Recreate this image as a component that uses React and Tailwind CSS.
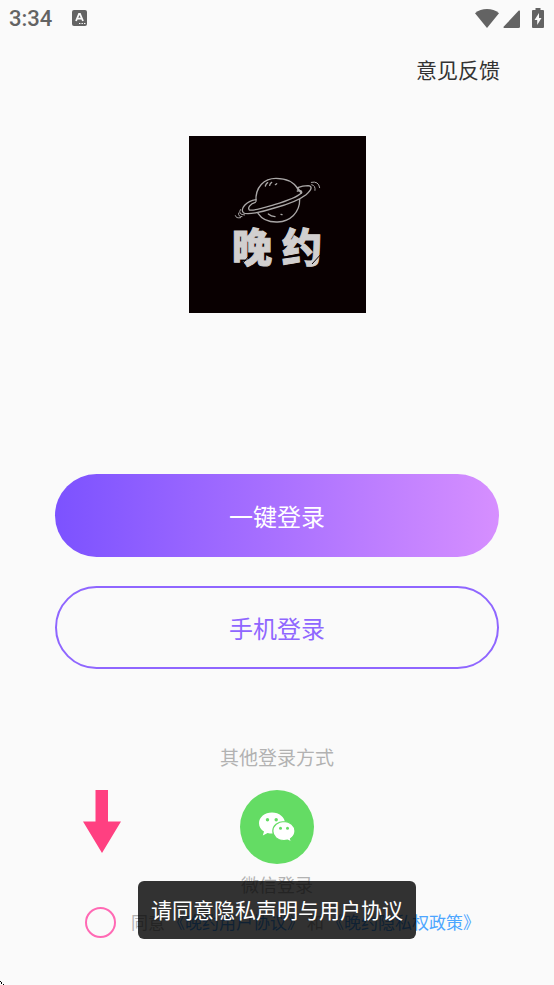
import { useState } from "react";

function StatusBar() {
  return (
    <div className="flex h-9 items-center justify-between pl-[9px] pr-[10px] text-[#636363]">
      <div className="flex items-center gap-5">
        <span className="pt-[2px] font-[Roboto,sans-serif] text-[22px] font-medium leading-6">3:34</span>
        <svg width="15" height="16" viewBox="0 0 15 16">
          <rect width="15" height="16" rx="2" fill="currentColor" />
          <path d="M4 11 L7 4 H8 L11 11 M5.2 8.7 H9.8" fill="none" stroke="#fafafa" strokeWidth="1.8" />
          <path d="M7 13.5h1.4M9.5 13.5h1.4M12 13.5h1.4" stroke="#fafafa" strokeWidth="1.2" />
        </svg>
      </div>
      <div className="flex items-end">
        <svg width="24" height="19" viewBox="0 0 24 19" className="mr-1">
          <path d="M0 4.2C3.4 1.4 7.5 0 12 0s8.6 1.4 12 4.2L12 19z" fill="currentColor" />
        </svg>
        <svg width="17" height="18" viewBox="0 0 17 18" className="mr-3">
          <path d="M17 1.2V16.5Q17 18 15.5 18H1Q0 17.5 .6 16.8L15.8 .6Q17 0 17 1.2z" fill="currentColor" />
        </svg>
        <svg width="12" height="20" viewBox="0 0 12 20">
          <path d="M3.5 0h5v2H11q1 0 1 1v16q0 1-1 1H1q-1 0-1-1V3q0-1 1-1h2.5z" fill="currentColor" />
          <path d="M7 5 L2.5 12 H5.2 V17 L9.5 10 H7z" fill="#fafafa" />
        </svg>
      </div>
    </div>
  );
}

function Logo() {
  return (
    <div className="mx-auto flex h-[177px] w-[177px] flex-col items-center bg-[#090001] pt-10">
      <svg width="90" height="49" viewBox="8 12 270 147" fill="none" stroke="#aaa7a7" strokeWidth="4" strokeLinecap="round">
        {/* planet */}
        <path d="M80 88C77 45 105 19 140 19C170 19 195 32 207 52" />
        <path d="M86 124C98 142 118 151 145 150C182 148 212 122 211 82" />
        {/* ring */}
        <path d="M80 83C50 88 32 110 42 122C52 130 98 120 135 108C172 98 212 82 230 68C248 53 250 42 236 41C225 41 215 43 205 47" />
        <path d="M78 91C63 95 54 107 60 114C75 117 105 107 135 98C172 87 205 74 216 63Q220 53 204 57" />
        <path d="M205 50L216 62" strokeWidth="6" />
        {/* shading and motion marks */}
        <path d="M108 42q2-7 7-10M121 40q1-6 6-9M138 38l4-3" />
        <path d="M117 126q8 7 20 8M155 127l3 1" />
        <path d="M246 31Q268 26 271 47M247 38Q259 40 257 55M33 113Q25 128 46 129M28 123Q25 134 38 134M18 131Q20 140 34 137" strokeWidth="3" />
      </svg>
      <div className="relative -mt-[3px] flex gap-[10px] font-['Noto_Sans_CJK_SC',sans-serif] text-[40px] font-black leading-[46px] text-[#d1cfcf] [-webkit-text-stroke:1px_#d1cfcf]">
        <span>晚</span>
        <span>约</span>
        <svg className="absolute inset-0" width="90" height="46" viewBox="0 0 90 46" fill="none" stroke="#090001">
          <path d="M11 41L17 34M51 35L66 33M80 42L90 31" />
        </svg>
      </div>
    </div>
  );
}

function DownArrow() {
  return (
    <svg width="38" height="63" viewBox="0 0 38 63">
      <path d="M12.5 0h12.5v31.5H38L19 63L0 31.5h12.5z" fill="#ff4081" />
    </svg>
  );
}

function WechatIcon() {
  return (
    <svg width="36" height="30" viewBox="0 0 36 30">
      <path d="M13 .5C5.8 .5 0 5.2 0 11.2c0 3.5 1.9 6.4 5 8.3L3.8 23.5l4.8-2.6c1.4.4 2.9.6 4.4.6 7.2 0 13-4.4 13-10.3S20.2.5 13 .5z" fill="#fff" />
      <path d="M25 9.5c-6.2 0-11.2 4.2-11.2 9.6S18.8 28.6 25 28.6c1.2 0 2.4-.2 3.5-.5l4 2-1-3.4c2.8-1.8 4.5-4.5 4.5-7.6 0-5.4-4.9-9.6-11-9.6z" fill="#fff" stroke="#64dc64" strokeWidth="1.2" />
      <circle cx="8.5" cy="7.7" r="1.7" fill="#64dc64" />
      <circle cx="17.2" cy="7.7" r="1.7" fill="#64dc64" />
      <circle cx="21.5" cy="16.3" r="1.5" fill="#64dc64" />
      <circle cx="28.5" cy="16.3" r="1.5" fill="#64dc64" />
    </svg>
  );
}

export default function App() {
  const [agreed, setAgreed] = useState(false);

  return (
    <div className="relative min-h-screen overflow-hidden bg-[#fafafa] font-['Noto_Sans_CJK_SC',sans-serif]">
      <StatusBar />

      <header className="flex justify-end px-[54px] pt-[18px]">
        <button className="text-[21px] leading-[30px] text-[#333]">意见反馈</button>
      </header>

      <main className="pt-[52px]">
        <Logo />

        <div className="mx-[55px] mt-[161px] flex flex-col gap-[29px]">
          <button className="h-[83px] rounded-full bg-linear-[90deg,#7c52ff,#d68fff] text-2xl text-white">
            一键登录
          </button>
          <button className="h-[83px] rounded-full border-2 border-[#8f66ff] text-2xl text-[#8f66ff]">
            手机登录
          </button>
        </div>

        <p className="mt-[74px] text-center text-[19px] leading-7 text-[#b2b2b2]">其他登录方式</p>

        <div className="mt-[19px] grid grid-cols-[1fr_auto_1fr] items-start">
          <div className="pl-[83px]">
            <DownArrow />
          </div>
          <button className="flex flex-col items-center gap-[6px] text-lg leading-7 text-[#b2b2b2]">
            <span className="flex h-[74px] w-[74px] items-center justify-center rounded-full bg-[#64dc64]">
              <WechatIcon />
            </span>
            微信登录
          </button>
        </div>

        <div className="mt-[9px] flex items-center gap-[15px] whitespace-nowrap pl-[85px] text-[17px] leading-7 text-[#b2b2b2]">
          <input
            id="agree"
            type="checkbox"
            className="h-[31px] w-[31px] shrink-0 appearance-none rounded-full border-2 border-[#ff69b4] checked:bg-[#ff69b4]"
            checked={agreed}
            onChange={(e) => setAgreed(e.target.checked)}
          />
          <div className="flex gap-[3px] pb-[2px]">
            <label htmlFor="agree">同意</label>
            <a href="#terms" className="text-[#4da6ff]">《晚约用户协议》</a>
            <span>和</span>
            <a href="#privacy" className="text-[#4da6ff]">《晚约隐私权政策》</a>
          </div>
        </div>
      </main>

      {/* toast */}
      <div role="status" className="absolute bottom-[46px] left-1/2 -translate-x-1/2 whitespace-nowrap rounded-md bg-black/80 px-[13px] pb-[15px] pt-[13px] text-[21px] leading-[30px] text-white">
        请同意隐私声明与用户协议
      </div>

      <svg className="absolute bottom-0 left-0" width="5" height="5" viewBox="0 0 5 5">
        <path d="M0 1h1v1h1v2h2v1H3V4H1V2H0z" fill="#000" />
      </svg>
    </div>
  );
}
